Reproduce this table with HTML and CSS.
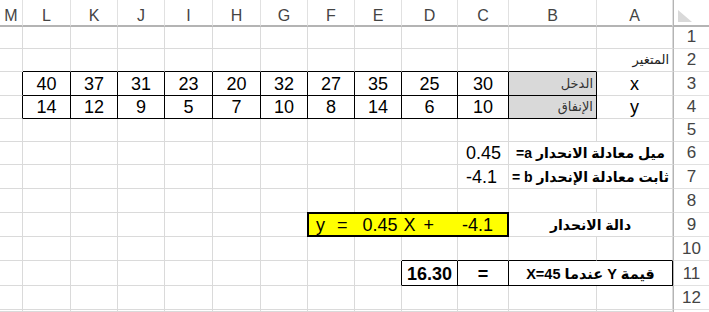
FILE: index.html
```html
<!DOCTYPE html>
<html lang="ar">
<head>
<meta charset="utf-8">
<title>Regression sheet</title>
<link rel="stylesheet" href="styles.css">
</head>
<body>
<div class="sheet">
  <div class="corner"><svg width="14" height="12" viewBox="0 0 14 12"><polygon points="0,0 0,12 14,12" fill="#d9d9d9"/></svg></div>
  <div class="ch">A</div><div class="ch">B</div><div class="ch">C</div><div class="ch">D</div><div class="ch">E</div><div class="ch">F</div><div class="ch">G</div><div class="ch">H</div><div class="ch">I</div><div class="ch">J</div><div class="ch">K</div><div class="ch">L</div><div class="ch">M</div>

  <div class="rh">1</div>
  <div></div><div></div><div></div><div></div><div></div><div></div><div></div><div></div><div></div><div></div><div></div><div></div><div></div>

  <div class="rh">2</div>
  <div class="lbl">المتغير</div>
  <div class="bb"></div><div class="bb"></div><div class="bb"></div><div class="bb"></div><div class="bb"></div><div class="bb"></div><div class="bb"></div><div class="bb"></div><div class="bb"></div><div class="bb"></div><div class="bb"></div>
  <div></div>

  <div class="rh">3</div>
  <div class="var">x</div>
  <div class="bx gray name">الدخل</div>
  <div class="bx n">30</div><div class="bx n">25</div><div class="bx n">35</div><div class="bx n">27</div><div class="bx n">32</div><div class="bx n">20</div><div class="bx n">23</div><div class="bx n">31</div><div class="bx n">37</div><div class="bx n">40</div>
  <div class="br"></div>

  <div class="rh">4</div>
  <div class="var">y</div>
  <div class="bx gray name">الإنفاق</div>
  <div class="bx n">10</div><div class="bx n">6</div><div class="bx n">14</div><div class="bx n">8</div><div class="bx n">10</div><div class="bx n">7</div><div class="bx n">5</div><div class="bx n">9</div><div class="bx n">12</div><div class="bx n">14</div>
  <div class="br"></div>

  <div class="rh">5</div>
  <div></div><div></div><div></div><div></div><div></div><div></div><div></div><div></div><div></div><div></div><div></div><div></div><div></div>

  <div class="rh">6</div>
  <div class="m2 title">ميل معادلة الانحدار a=</div>
  <div class="val">0.45</div>
  <div></div><div></div><div></div><div></div><div></div><div></div><div></div><div></div><div></div><div></div>

  <div class="rh">7</div>
  <div class="m2 title">ثابت معادلة الإنحدار b =</div>
  <div class="val">-4.1</div>
  <div></div><div></div><div></div><div></div><div></div><div></div><div></div><div></div><div></div><div></div>

  <div class="rh">8</div>
  <div></div><div></div><div></div><div></div><div></div><div></div><div></div><div></div><div></div><div></div><div></div><div></div><div></div>

  <div class="rh">9</div>
  <div class="m2 title">دالة الانحدار</div>
  <div class="eq"><span class="t-y">y</span><span class="t-eq">=</span><span class="t-a">0.45</span><span class="t-x">X</span><span class="t-p">+</span><span class="t-b">-4.1</span></div>
  <div></div><div></div><div></div><div></div><div></div><div></div><div></div>

  <div class="rh">10</div>
  <div class="bb"></div><div class="bb"></div><div class="bb"></div><div class="bb"></div>
  <div></div><div></div><div></div><div></div><div></div><div></div><div></div><div></div><div></div>

  <div class="rh">11</div>
  <div class="m2 bx title big">قيمة Y عندما X=45</div>
  <div class="bx res">=</div>
  <div class="bx res">16.30</div>
  <div class="br"></div>
  <div></div><div></div><div></div><div></div><div></div><div></div><div></div><div></div>

  <div class="rh">12</div>
  <div></div><div></div><div></div><div></div><div></div><div></div><div></div><div></div><div></div><div></div><div></div><div></div><div></div>

  <div class="rh"></div>
  <div></div><div></div><div></div><div></div><div></div><div></div><div></div><div></div><div></div><div></div><div></div><div></div><div></div>
</div>
</body>
</html>
```

FILE: styles.css
```css
* { box-sizing: border-box; }
html, body { margin: 0; padding: 0; background: #fff; }
body {
  width: 709px;
  height: 312px;
  overflow: hidden;
  font-family: "Liberation Sans", "DejaVu Sans", sans-serif;
  color: #000;
}
.sheet {
  display: grid;
  direction: rtl;
  grid-template-columns: 36px 76px 88px 51px 56px 47px 47px 47px 48px 48px 47px 47px 48px 23px;
  grid-template-rows: 27px 22px 23px 24px 23px 23px 23px 24px 24px 24px 24px 25px 24px 2px;
  width: 709px;
  height: 312px;
  overflow: hidden;
}
.sheet > div {
  border-right: 1px solid #dadada;
  border-bottom: 1px solid #dadada;
  display: flex;
  align-items: flex-end;
  white-space: nowrap;
  min-width: 0;
}
.sheet > .corner {
  border-right: 0;
  border-left: 1px solid #b4b4b4;
  border-bottom: 2px solid #b4b4b4;
  direction: ltr;
  align-items: flex-start;
  padding: 10px 0 0 4px;
}
.corner svg { display: block; }
.sheet > .ch {
  border-bottom: 2px solid #b4b4b4;
  border-right-color: #e1e1e1;
  justify-content: center;
  align-items: flex-start;
  padding-top: 7px;
  font-size: 16px;
  line-height: 18px;
  color: #444;
}
.sheet > .rh {
  border-right: 0;
  border-left: 1px solid #b4b4b4;
  border-bottom-color: #e1e1e1;
  justify-content: center;
  font-size: 17px;
  line-height: 18px;
  padding-bottom: 2px;
  color: #444;
}
.sheet > .bb { border-bottom-color: #000; }
.sheet > .br { border-right-color: #000; }
.sheet > .bx { border-right-color: #000; border-bottom-color: #000; }
.gray { background: #d9d9d9; }
.lbl, .name {
  font-size: 13px;
  line-height: 16px;
  padding: 0 3px 3px 0;
  color: #222;
}
.name { color: #333; }
.var {
  justify-content: center;
  font-size: 18px;
  line-height: 18px;
  padding-bottom: 2px;
}
.n {
  justify-content: center;
  font-size: 18px;
  line-height: 18px;
  padding-bottom: 2px;
}
.m2 { grid-column: span 2; }
.title {
  justify-content: center;
  font-weight: bold;
  font-size: 14px;
  line-height: 18px;
  padding-bottom: 2px;
}
.title.big { font-size: 14.5px; }
.sheet > .val {
  direction: ltr;
  justify-content: flex-start;
  padding-left: 8px;
  font-size: 18px;
  line-height: 18px;
  padding-bottom: 2px;
}
.sheet > .eq {
  grid-column: span 4;
  margin: -1px 0 0 -1px;
  border: 2px solid #000;
  background: #ffff00;
  z-index: 1;
  direction: ltr;
  justify-content: flex-start;
  font-size: 18px;
  line-height: 18px;
  padding: 0 0 1px 7px;
}
.t-eq { margin-left: 12px; }
.t-a { margin-left: 15px; }
.t-x { margin-left: 6px; }
.t-p { margin-left: 8px; }
.t-b { margin-left: 28px; }
.res {
  justify-content: center;
  font-weight: bold;
  font-size: 18px;
  line-height: 18px;
  padding-bottom: 2px;
}
```
